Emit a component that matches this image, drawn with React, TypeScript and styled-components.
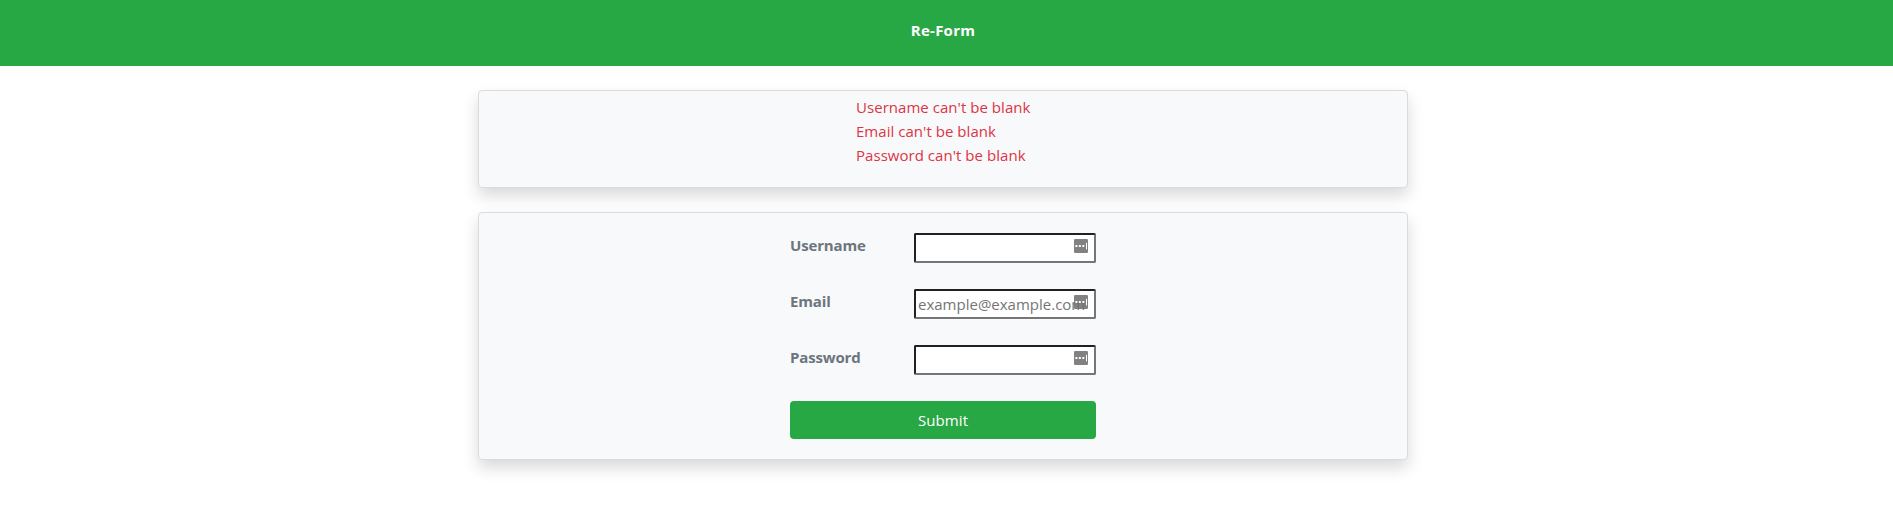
import React from "react";
import styled, { createGlobalStyle } from "styled-components";

const GlobalStyle = createGlobalStyle`
  *, *::before, *::after { box-sizing: border-box; }
  body {
    margin: 0;
    background: #fff;
    color: #212529;
    font: 400 15px/24px "Segoe UI", "Open Sans", "Noto Sans", sans-serif;
  }
`;

const Page = styled.div`
  min-height: 100vh;
  background: #fff;
`;

const Header = styled.header`
  height: 66px;
  padding: 18px 7px 0 0;
  background: #28a745;
  color: #fff;
  text-align: center;
`;

const Title = styled.h1`
  margin: 0;
  font-size: 15px;
  font-weight: 700;
  line-height: 24px;
  letter-spacing: 0.25px;
`;

const Main = styled.main`
  display: flex;
  flex-direction: column;
  align-items: center;
  gap: 24px;
  padding: 24px 7px 0 0;
`;

const Card = styled.section<{ $height: number; $top: number }>`
  display: flex;
  justify-content: center;
  align-items: flex-start;
  width: 930px;
  height: ${(p) => p.$height}px;
  padding-top: ${(p) => p.$top}px;
  background: #f8f9fb;
  border: 1px solid #dadbdd;
  border-radius: 4px;
  box-shadow: 0 8px 16px rgba(0, 0, 0, 0.15);
`;

const ErrorList = styled.ul`
  width: 174px;
  margin: 0;
  padding: 0;
  list-style: none;
  color: #dc3545;
  white-space: nowrap;
`;

const ErrorItem = styled.li`
  letter-spacing: 0.04px;
`;

const Form = styled.form`
  display: flex;
  flex-direction: column;
  gap: 26px;
  width: 306px;
`;

const Field = styled.div`
  display: flex;
  justify-content: space-between;
  height: 30px;
`;

const Label = styled.label`
  color: #6c757d;
  font-weight: 700;
  letter-spacing: -0.15px;
`;

const InputWrap = styled.div`
  position: relative;
  width: 182px;
  height: 30px;
`;

const Input = styled.input`
  display: block;
  width: 100%;
  height: 100%;
  margin: 0;
  padding: 1px 2px;
  border: 2px solid;
  border-color: #212121 #767676 #767676 #212121;
  border-radius: 2px;
  background: #fff;
  font: inherit;
  outline: none;
  &::placeholder { color: #757575; opacity: 1; }
`;

const FillIcon = styled.svg`
  position: absolute;
  top: 6px;
  right: 8px;
  width: 14px;
  height: 14px;
`;

const SubmitButton = styled.button`
  height: 38px;
  padding: 0 0 1px;
  border: 0;
  border-radius: 4px;
  background: #28a745;
  color: #fff;
  font: inherit;
  letter-spacing: 0.1px;
`;

const errors = [
  "Username can't be blank",
  "Email can't be blank",
  "Password can't be blank",
];

const fields = [
  { id: "username", label: "Username", type: "text", placeholder: "" },
  { id: "email", label: "Email", type: "email", placeholder: "example@example.com" },
  { id: "password", label: "Password", type: "password", placeholder: "" },
];

const AutofillIcon = () => (
  <FillIcon viewBox="0 0 14 14" aria-hidden="true">
    <rect width="14" height="14" rx="1.2" fill="#6f6f6f" fillOpacity="0.88" />
    <g fill="#fff">
      <rect x="1.4" y="6" width="2" height="2" rx="0.5" />
      <rect x="4.9" y="6" width="2" height="2" rx="0.5" />
      <rect x="8.3" y="6" width="2" height="2" rx="0.5" />
      <rect x="12" y="3.8" width="1" height="6.6" />
    </g>
  </FillIcon>
);

export default function App() {
  return (
    <Page>
      <GlobalStyle />
      <Header>
        <Title>Re-Form</Title>
      </Header>
      <Main>
        <Card $height={98} $top={4}>
          <ErrorList>
            {errors.map((text) => (
              <ErrorItem key={text}>{text}</ErrorItem>
            ))}
          </ErrorList>
        </Card>
        <Card $height={248} $top={20}>
          <Form noValidate onSubmit={(e) => e.preventDefault()}>
            {fields.map((f) => (
              <Field key={f.id}>
                <Label htmlFor={f.id}>{f.label}</Label>
                <InputWrap>
                  <Input id={f.id} type={f.type} placeholder={f.placeholder} />
                  <AutofillIcon />
                </InputWrap>
              </Field>
            ))}
            <SubmitButton type="submit">Submit</SubmitButton>
          </Form>
        </Card>
      </Main>
    </Page>
  );
}
